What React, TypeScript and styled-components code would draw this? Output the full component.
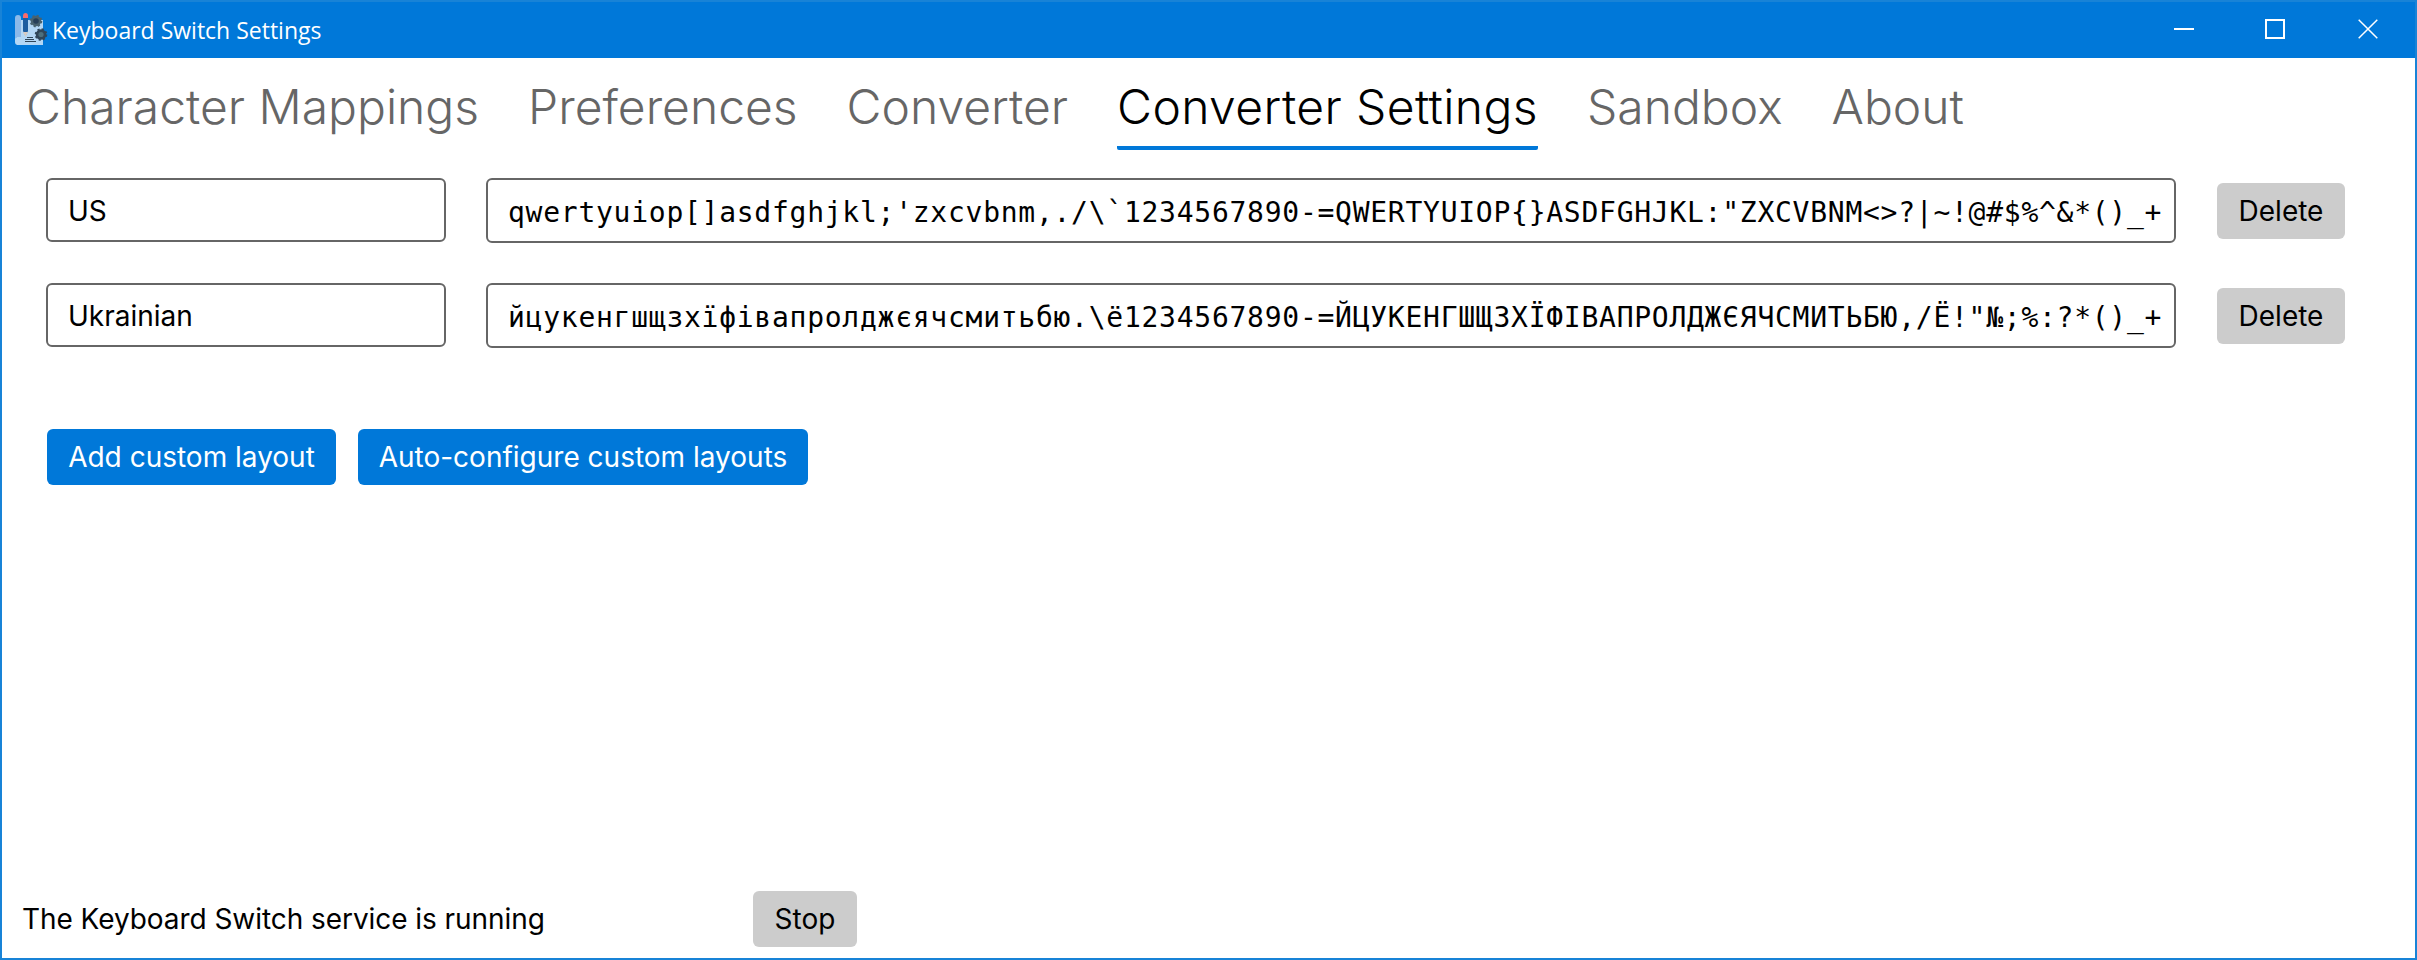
import React from "react";
import styled, { createGlobalStyle } from "styled-components";

const Global = createGlobalStyle`
  *, *::before, *::after { box-sizing: border-box; }
  body { margin: 0; background: #fff; }
`;

const Window = styled.div`
  display: flex;
  flex-direction: column;
  height: 960px;
  border: 2px solid #1883d7;
  background: #fff;
  color: #000;
  font-family: Inter, "Liberation Sans", sans-serif;
  font-size: 28px;
  line-height: 34px;
`;

const TitleBar = styled.header`
  display: flex;
  align-items: center;
  height: 56px;
  padding-left: 12px;
  background: #0078d9;
  color: #fff;
  flex: none;

  > svg { margin-bottom: 2px; }
`;

const Title = styled.span`
  margin-left: 4px;
  flex: 1;
  font-family: "Open Sans", "Noto Sans", sans-serif;
  font-size: 23px;
  line-height: 32px;
`;

const Caption = styled.span<{ $width: number }>`
  display: flex;
  justify-content: center;
  width: ${(p) => p.$width}px;
  padding-bottom: 2px;
`;

const Tabs = styled.nav`
  display: flex;
  flex: none;
  gap: 49px;
  padding: 19px 0 0 24px;
`;

const Tab = styled.a<{ $active?: boolean }>`
  height: 73px;
  border-bottom: 4px solid ${(p) => (p.$active ? "#0078d9" : "transparent")};
  border-radius: 2px;
  color: ${(p) => (p.$active ? "#000" : "#666")};
  font-size: 48px;
  font-weight: 300;
  letter-spacing: ${(p) => (p.$active ? 0.4 : 0)}px;
  line-height: 60px;
  white-space: nowrap;
`;

const Content = styled.main`
  flex: 1;
  padding: 28px 0 0 44px;
`;

const Row = styled.div`
  display: flex;
  gap: 40px;
  height: 65px;
  margin-bottom: 40px;
`;

const Field = styled.div<{ $mono?: boolean }>`
  width: ${(p) => (p.$mono ? 1690 : 400)}px;
  height: ${(p) => (p.$mono ? 65 : 64)}px;
  padding: ${(p) => (p.$mono ? 16 : 14)}px 20px 0;
  border: 2px solid #666;
  border-radius: 6px;
  white-space: pre;
  ${(p) =>
    p.$mono &&
    `font-family: "DejaVu Sans Mono", monospace;
     font-size: 28px;
     letter-spacing: 0.74px;`}
`;

const Button = styled.button<{ $accent?: boolean; $width: number }>`
  width: ${(p) => p.$width}px;
  height: 56px;
  padding: 0;
  border: 0;
  border-radius: 6px;
  background: ${(p) => (p.$accent ? "#0078d9" : "#ccc")};
  color: ${(p) => (p.$accent ? "#fff" : "#000")};
  font: inherit;
  white-space: nowrap;
`;

const DeleteButton = styled(Button)`
  margin: 5px 0 0 1px;
`;

const Actions = styled.div`
  display: flex;
  gap: 22px;
  margin: 81px 0 0 1px;
`;

const Status = styled.footer`
  display: flex;
  align-items: center;
  flex: none;
  padding: 0 0 11px 20px;
`;

const StatusText = styled.span`
  width: 731px;
  letter-spacing: -0.06px;
`;

const AppIcon = () => (
  <svg width="34" height="34" viewBox="14 12 34 34">
    <path d="M19 20h24v25H17v-24z" fill="#b3d7f5" />
    <path d="M15 18q0-3 3-3t3 3v19h-3q-3 0-3 3z" fill="#8bb9e9" />
    <path d="M15 39q0-2 3-2t3 2h22v6H18q-3 0-3-3z" fill="#b3d7f5" />
    <path d="M23 18h5v13l-2.500 5-2.500-5z" fill="#1c5da0" />
    <path d="M23 32h5l-2.500 5z" fill="#d8ccc2" />
    <path d="M23 18v-2q0-3 2.500-3t2.500 3v2z" fill="#fa6b6b" />
    <path d="M27 37.500h6M25 39.500h9M25 41.500h11" stroke="#304659" strokeWidth="1" />
    <circle cx="36" cy="21" r="5.300" fill="#48626f" stroke="#48626f" strokeWidth="2" strokeDasharray="2.100 2.060" />
    <circle cx="36" cy="21" r="2.800" fill="#263f58" />
    <circle cx="41" cy="34.500" r="5.300" fill="#304659" stroke="#304659" strokeWidth="2" strokeDasharray="2.100 2.060" />
    <circle cx="41" cy="34.500" r="2.600" fill="#4d6f7c" />
  </svg>
);

const captions = [
  { name: "minimize", width: 90, d: "M0 10h20" },
  { name: "maximize", width: 92, d: "M1 1h18v18H1z" },
  { name: "close", width: 94, d: "M.7.7l18.600 18.600M19.300.7L.7 19.300" },
];

const tabs = ["Character Mappings", "Preferences", "Converter", "Converter Settings", "Sandbox", "About"];

const layouts = [
  { name: "US", chars: "qwertyuiop[]asdfghjkl;'zxcvbnm,./\\`1234567890-=QWERTYUIOP{}ASDFGHJKL:\"ZXCVBNM<>?|~!@#$%^&*()_+" },
  { name: "Ukrainian", chars: "йцукенгшщзхїфівапролджєячсмитьбю.\\ё1234567890-=ЙЦУКЕНГШЩЗХЇФІВАПРОЛДЖЄЯЧСМИТЬБЮ,/Ё!\"№;%:?*()_+" },
];

export default function App() {
  return (
    <Window>
      <Global />
      <TitleBar>
        <AppIcon />
        <Title>Keyboard Switch Settings</Title>
        {captions.map((c) => (
          <Caption key={c.name} $width={c.width}>
            <svg width="20" height="20" fill="none" stroke="#fff" strokeWidth={c.name === "close" ? 1.5 : 2}>
              <path d={c.d} />
            </svg>
          </Caption>
        ))}
      </TitleBar>
      <Tabs>
        {tabs.map((t) => (
          <Tab key={t} $active={t === "Converter Settings"}>{t}</Tab>
        ))}
      </Tabs>
      <Content>
        {layouts.map((l) => (
          <Row key={l.name}>
            <Field>{l.name}</Field>
            <Field $mono>{l.chars}</Field>
            <DeleteButton $width={128}>Delete</DeleteButton>
          </Row>
        ))}
        <Actions>
          <Button $accent $width={289}>Add custom layout</Button>
          <Button $accent $width={450}>Auto-configure custom layouts</Button>
        </Actions>
      </Content>
      <Status>
        <StatusText>The Keyboard Switch service is running</StatusText>
        <Button $width={104}>Stop</Button>
      </Status>
    </Window>
  );
}
